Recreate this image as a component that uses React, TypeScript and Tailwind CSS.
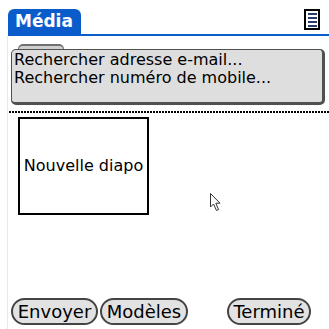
import React from 'react';

const font = { fontFamily: '"DejaVu Sans", Verdana, sans-serif' };

const MenuIcon: React.FC = () => (
  <div className="w-[16px] h-[21px] border-2 border-black bg-white flex flex-col items-center justify-center gap-[2px]">
    <div className="w-[9px] h-[2px] bg-[#2a3a6a]" />
    <div className="w-[9px] h-[2px] bg-[#2a3a6a]" />
    <div className="w-[9px] h-[2px] bg-[#2a3a6a]" />
    <div className="w-[9px] h-[2px] bg-[#2a3a6a]" />
  </div>
);

const Cursor: React.FC = () => (
  <svg width="14" height="20" viewBox="0 0 14 20" className="absolute left-[209px] top-[192px]">
    <path d="M1.5 1.5 L1.5 15 L4.5 12 L7.5 18.5 L9.5 17.5 L6.8 11.2 L11 11.2 Z" fill="white" stroke="#333" strokeWidth="1" />
  </svg>
);

const PalmButton: React.FC<{ label: string; w: string }> = ({ label, w }) => (
  <button className={`${w} h-[27px] rounded-full border-2 border-[#444] bg-[#e2e2e2] text-black text-[18px] leading-none flex items-center justify-center`}>
    {label}
  </button>
);

export default function App() {
  return (
    <div className="relative w-[329px] h-[329px] bg-white flex flex-col overflow-hidden text-black" style={font}>
      <div className="flex items-start pt-[9px] pl-[8px] pr-[9px]">
        <div className="w-[73px] h-[25px] rounded-t-[6px] bg-[#0b5ccb] text-white font-bold text-[17px] leading-[25px] pl-[7px]">
          Média
        </div>
        <div className="ml-auto">
          <MenuIcon />
        </div>
      </div>
      <div className="ml-[8px] h-[2px] bg-[#0b5ccb]" />

      <div className="flex-1 ml-[7px] border-l border-[#e8e8e8] flex flex-col">
        <div className="mt-[8px] ml-[10px] w-[46px] h-[5px] rounded-t-[5px] border-t-2 border-x border-[#707070] bg-[#cfcfcf]" />
        <div className="ml-[3px] w-[314px] h-[56px] rounded-[5px] border border-r-[3px] border-b-[3px] border-[#505050] bg-[#dedede] px-[2px] pt-[1px] text-[16px] leading-[18px] whitespace-nowrap">
          <div>Rechercher adresse e-mail...</div>
          <div>Rechercher numéro de mobile...</div>
        </div>
        <div className="mt-[6px] ml-[1px] h-[2px] bg-[repeating-linear-gradient(90deg,#000_0px,#000_2px,transparent_2px,transparent_3px)]" />

        <div className="mt-[4px] ml-[10px] w-[131px] h-[98px] border-2 border-black flex items-center justify-center text-[16px]">
          Nouvelle diapo
        </div>

        <div className="mt-auto mb-[4px] ml-[3px] flex items-center">
          <PalmButton label="Envoyer" w="w-[87px]" />
          <div className="ml-[2px]">
            <PalmButton label="Modèles" w="w-[88px]" />
          </div>
          <div className="ml-[39px]">
            <PalmButton label="Terminé" w="w-[84px]" />
          </div>
        </div>
      </div>

      <Cursor />
    </div>
  );
}
